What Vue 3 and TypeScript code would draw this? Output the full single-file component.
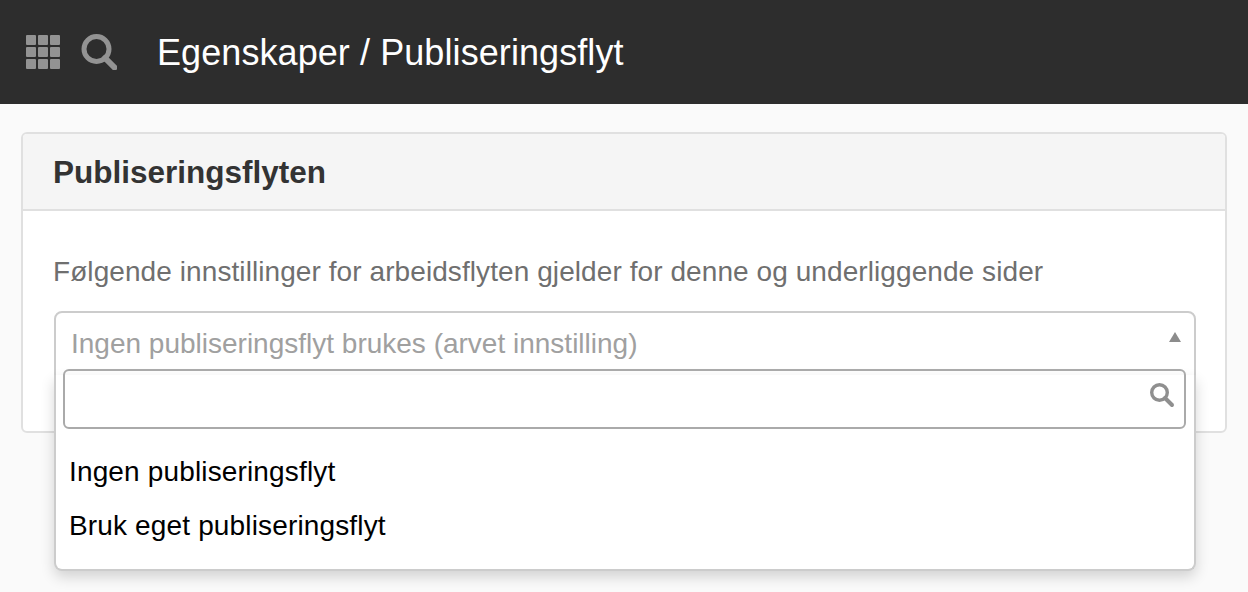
<script setup lang="ts">
const options: string[] = ['Ingen publiseringsflyt', 'Bruk eget publiseringsflyt']
const cells: number[] = [0, 1, 2, 3, 4, 5, 6, 7, 8]
</script>

<template>
  <div class="page">
    <header class="topbar">
      <div class="grid-icon">
        <span v-for="c in cells" :key="c" class="cell"></span>
      </div>
      <svg class="search-icon" viewBox="0 0 36 36" width="36" height="36">
        <circle cx="15.5" cy="15" r="12.5" fill="none" stroke="#939393" stroke-width="5" />
        <path d="M24 24 L33.5 33.5" stroke="#939393" stroke-width="6" stroke-linecap="round" />
      </svg>
      <h1 class="title">Egenskaper / Publiseringsflyt</h1>
    </header>
    <main class="content">
      <section class="panel">
        <div class="panel-head">Publiseringsflyten</div>
        <div class="panel-body">
          <p class="hint">Følgende innstillinger for arbeidsflyten gjelder for denne og underliggende sider</p>
          <div class="select">
            <div class="select-value">
              <span>Ingen publiseringsflyt brukes (arvet innstilling)</span>
              <span class="arrow"></span>
            </div>
            <div class="dropdown">
              <div class="search-box">
                <svg class="box-icon" viewBox="0 0 26 26" width="26" height="26">
                  <circle cx="10.5" cy="10.5" r="7.8" fill="none" stroke="#8f8f8f" stroke-width="3.4" />
                  <path d="M16 16 L23 23" stroke="#8f8f8f" stroke-width="4" stroke-linecap="round" />
                </svg>
              </div>
              <ul class="options">
                <li v-for="o in options" :key="o" class="option">{{ o }}</li>
              </ul>
            </div>
          </div>
        </div>
      </section>
    </main>
  </div>
</template>

<style>
html, body { margin: 0; background: #fafafa; }
</style>

<style scoped>
.page {
  width: 1248px;
  height: 592px;
  overflow: hidden;
  background: #fafafa;
  font-family: "Liberation Sans", Arial, sans-serif;
}
.topbar {
  height: 104px;
  background: #2d2d2d;
  display: flex;
  align-items: center;
  padding-left: 26px;
  box-sizing: border-box;
}
.grid-icon {
  display: grid;
  grid-template-columns: repeat(3, 10px);
  grid-auto-rows: 10px;
  gap: 2px;
  width: 34px;
}
.cell { background: #939393; border-radius: 1px; }
.search-icon { margin-left: 21px; display: block; }
.title {
  margin: 2px 0 0 40px;
  color: #fff;
  font-size: 36px;
  font-weight: 400;
  line-height: 1;
  letter-spacing: 0.08px;
}
.content { padding: 28px 21px 0 21px; }
.panel {
  box-sizing: border-box;
  height: 301px;
  background: #fff;
  border: 2px solid #e0e0e0;
  border-radius: 6px;
}
.panel-head {
  height: 77px;
  box-sizing: border-box;
  padding: 2px 0 0 30px;
  display: flex;
  align-items: center;
  background: #f5f5f5;
  border-bottom: 2px solid #e0e0e0;
  border-radius: 4px 4px 0 0;
  font-size: 31.5px;
  font-weight: 700;
  color: #333;
}
.panel-body { padding: 0 29px 0 31px; }
.hint {
  margin: 43px 0 0 -1px;
  font-size: 28px;
  line-height: 36px;
  letter-spacing: 0.08px;
  color: #6f6f6f;
}
.select {
  position: relative;
  margin-top: 21px;
  height: 60px;
  box-sizing: border-box;
  border: 2px solid #ccc;
  border-radius: 8px 8px 0 0;
  background: #fff;
}
.select-value {
  display: flex;
  align-items: center;
  justify-content: space-between;
  box-sizing: border-box;
  height: 58px;
  padding: 4px 13px 0 15px;
  font-size: 28px;
  color: #a0a0a0;
}
.arrow {
  width: 0;
  height: 0;
  margin-bottom: 14px;
  border-left: 6px solid transparent;
  border-right: 6px solid transparent;
  border-bottom: 10px solid #8c8c8c;
}
.dropdown {
  position: absolute;
  z-index: 5;
  left: -2px;
  right: -2px;
  top: 46px;
  height: 212px;
  box-sizing: border-box;
  padding: 10px 8px 0 7px;
  background: #fff;
  border: 2px solid #ccc;
  border-top: 0;
  border-radius: 0 0 8px 8px;
}
.dropdown::before {
  content: "";
  position: absolute;
  z-index: -1;
  left: -2px;
  right: -2px;
  top: 16px;
  bottom: -2px;
  border-radius: 0 0 8px 8px;
  box-shadow: 0 6px 14px rgba(0, 0, 0, 0.16);
}
.search-box {
  height: 60px;
  box-sizing: border-box;
  border: 2px solid #aaa;
  border-radius: 6px;
  display: flex;
  align-items: center;
  justify-content: flex-end;
  padding-right: 9px;
}
.box-icon { display: block; margin-top: -8px; }
.options {
  list-style: none;
  margin: 16px 0 0;
  padding: 0 0 0 6px;
}
.option {
  height: 54px;
  line-height: 54px;
  font-size: 28px;
  letter-spacing: 0.15px;
  color: #000;
}
</style>
